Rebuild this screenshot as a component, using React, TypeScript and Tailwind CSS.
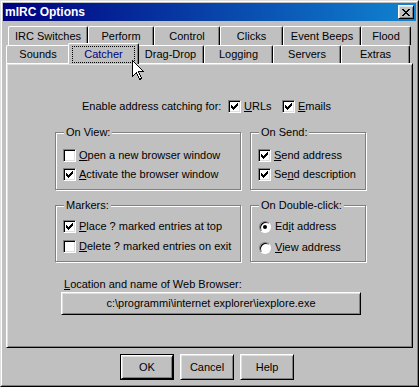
import React from "react";

const raised =
  "border border-t-white border-l-white border-r-black border-b-black shadow-[inset_1px_1px_0_#dfdfdf,inset_-1px_-1px_0_#808080]";

function CheckMark() {
  return (
    <svg width="7" height="7" viewBox="0 0 7 7" shapeRendering="crispEdges">
      <path
        d="M6 0h1v3h-1zM5 1h1v3h-1zM4 2h1v3h-1zM0 2h1v3h-1zM1 3h1v3h-1zM2 4h1v3h-1zM3 3h1v3h-1z"
        fill="#000"
      />
    </svg>
  );
}

function Check({ checked, children }: { checked?: boolean; children: React.ReactNode }) {
  return (
    <div className="flex items-center h-[13px]">
      <span className="w-[13px] h-[13px] shrink-0 bg-white flex items-center justify-center border border-t-[#808080] border-l-[#808080] border-r-white border-b-white shadow-[inset_1px_1px_0_#000,inset_-1px_-1px_0_#dfdfdf]">
        {checked && <CheckMark />}
      </span>
      <span className="ml-[3px] whitespace-nowrap">{children}</span>
    </div>
  );
}

function Radio({ checked, children }: { checked?: boolean; children: React.ReactNode }) {
  return (
    <div className="flex items-center h-[13px]">
      <span className="w-[12px] h-[12px] shrink-0 rounded-full bg-white flex items-center justify-center border border-t-[#808080] border-l-[#808080] border-r-white border-b-white shadow-[inset_1px_1px_0_#000]">
        {checked && <span className="w-[4px] h-[4px] rounded-full bg-black" />}
      </span>
      <span className="ml-[4px] whitespace-nowrap">{children}</span>
    </div>
  );
}

function GroupBox({
  label,
  className,
  children,
}: {
  label: string;
  className: string;
  children: React.ReactNode;
}) {
  return (
    <div
      className={`relative border border-[#808080] shadow-[inset_1px_1px_0_#fff,1px_1px_0_#fff] ${className}`}
    >
      {/* legend sits over the etched line */}
      <span className="absolute top-[-7px] left-[8px] bg-[#c0c0c0] px-[2px] leading-[13px]">
        {label}
      </span>
      {children}
    </div>
  );
}

function Tab({ label, width }: { label: string; width: string }) {
  return (
    <div
      className={`${width} h-full flex items-center justify-center border-t border-l border-t-white border-l-white border-r border-r-black shadow-[inset_-1px_0_0_#808080] rounded-tl-[2px] rounded-tr-[2px]`}
    >
      {label}
    </div>
  );
}

export default function App() {
  return (
    <div className="w-[419px] h-[387px] bg-[#c0c0c0] text-[11px] leading-[13px] text-black font-['Liberation_Sans',Arial,sans-serif] border border-t-[#dfdfdf] border-l-[#dfdfdf] border-r-black border-b-black relative overflow-hidden">
      <div className="h-full border border-t-white border-l-white border-r-[#808080] border-b-[#808080] p-[1px] flex flex-col">
        {/* Title bar */}
        <div className="h-[18px] flex items-center justify-between pl-[2px] pr-[2px] bg-[linear-gradient(to_right,#000080,#1084d0)]">
          <span className="text-white font-bold text-[12px] leading-[14px]">mIRC Options</span>
          <div className={`w-[16px] h-[14px] flex items-center justify-center bg-[#c0c0c0] ${raised}`}>
            <svg width="8" height="7" viewBox="0 0 8 7" shapeRendering="crispEdges">
              <path
                d="M0 0h2v1h-2zM6 0h2v1h-2zM1 1h2v1h-2zM5 1h2v1h-2zM2 2h4v1h-4zM3 3h2v1h-2zM2 4h4v1h-4zM1 5h2v1h-2zM5 5h2v1h-2zM0 6h2v1h-2zM6 6h2v1h-2z"
                fill="#000"
              />
            </svg>
          </div>
        </div>

        {/* Tabs */}
        <div className="mt-[5px] ml-[5px] h-[19px] flex">
          <Tab label="IRC Switches" width="w-[80px]" />
          <Tab label="Perform" width="w-[66px]" />
          <Tab label="Control" width="w-[66px]" />
          <Tab label="Clicks" width="w-[63px]" />
          <Tab label="Event Beeps" width="w-[78px]" />
          <Tab label="Flood" width="w-[50px]" />
        </div>
        <div className="ml-[3px] h-[18px] flex items-end">
          <Tab label="Sounds" width="w-[64px]" />
          <div className="relative z-10 w-[71px] h-[21px] mb-[-1px] mx-[-2px] bg-[#c0c0c0] flex items-center justify-center border-t border-l border-t-white border-l-white border-r border-r-black shadow-[inset_-1px_0_0_#808080] rounded-tl-[2px] rounded-tr-[2px]">
            <span className="text-[#000080] px-[11px] py-[1px] border border-dotted border-black">
              Catcher
            </span>
          </div>
          <Tab label="Drag-Drop" width="w-[67px]" />
          <Tab label="Logging" width="w-[69px]" />
          <Tab label="Servers" width="w-[68px]" />
          <Tab label="Extras" width="w-[69px]" />
        </div>

        {/* Panel */}
        <div className="ml-[3px] w-[407px] h-[285px] border border-t-white border-l-white border-r-black border-b-black shadow-[inset_1px_1px_0_#dfdfdf,inset_-1px_-1px_0_#808080] p-[1px]">
          <div className="mt-[35px] ml-[74px] flex items-center h-[13px]">
            <span className="w-[146px]">Enable address catching for:</span>
            <div className="w-[54px]">
              <Check checked>
                <u>U</u>RLs
              </Check>
            </div>
            <Check checked>
              <u>E</u>mails
            </Check>
          </div>

          <div className="mt-[19px] ml-[47px] flex gap-[9px]">
            <GroupBox label="On View:" className="w-[186px] h-[58px] pt-[16px] pl-[7px] flex flex-col gap-[6px]">
              <Check>
                <u>O</u>pen a new browser window
              </Check>
              <Check checked>
                <u>A</u>ctivate the browser window
              </Check>
            </GroupBox>
            <GroupBox label="On Send:" className="w-[116px] h-[58px] pt-[16px] pl-[7px] flex flex-col gap-[6px]">
              <Check checked>
                <u>S</u>end address
              </Check>
              <Check checked>
                Se<u>n</u>d description
              </Check>
            </GroupBox>
          </div>

          <div className="mt-[15px] ml-[47px] flex gap-[9px]">
            <GroupBox label="Markers:" className="w-[186px] h-[57px] pt-[14px] pl-[7px] flex flex-col gap-[7px]">
              <Check checked>
                <u>P</u>lace ? marked entries at top
              </Check>
              <Check>
                <u>D</u>elete ? marked entries on exit
              </Check>
            </GroupBox>
            <GroupBox label="On Double-click:" className="w-[116px] h-[57px] pt-[14px] pl-[8px] flex flex-col gap-[8px]">
              <Radio checked>
                Ed<u>i</u>t address
              </Radio>
              <Radio>
                <u>V</u>iew address
              </Radio>
            </GroupBox>
          </div>

          <div className="mt-[16px] ml-[56px]">
            <u>L</u>ocation and name of Web Browser:
          </div>
          <div className={`mt-[1px] ml-[53px] w-[300px] h-[23px] flex items-center justify-center ${raised}`}>
            c:\programmi\internet explorer\iexplore.exe
          </div>
        </div>

        {/* Buttons */}
        <div className="mt-[6px] ml-[117px] flex gap-[6px]">
          <div className="w-[54px] h-[26px] border border-black">
            <div className={`h-full flex items-center justify-center ${raised}`}>OK</div>
          </div>
          <div className={`w-[54px] h-[26px] flex items-center justify-center ${raised}`}>Cancel</div>
          <div className={`w-[54px] h-[26px] flex items-center justify-center ${raised}`}>Help</div>
        </div>
      </div>

      {/* mouse pointer */}
      <svg
        className="absolute left-[131px] top-[59px] z-20"
        width="12"
        height="20"
        viewBox="0 0 12 20"
        shapeRendering="crispEdges"
      >
        <path
          d="M0.5 0.5 L0.5 16.5 L4.5 12.5 L7.5 19.5 L9.5 18.5 L6.5 11.5 L11.5 11.5 Z"
          fill="#fff"
          stroke="#000"
          strokeWidth="1"
        />
      </svg>
    </div>
  );
}
